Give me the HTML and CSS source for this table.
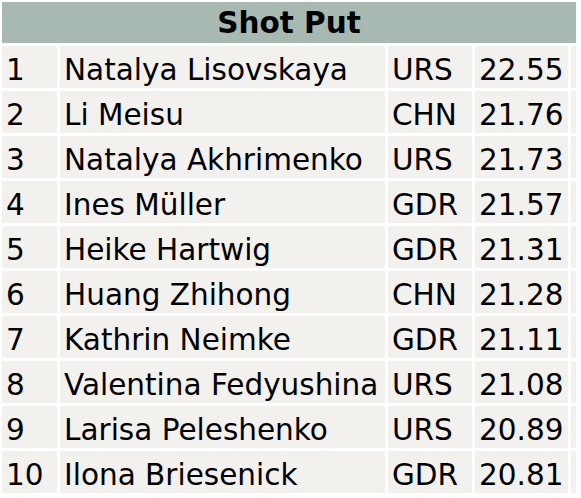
FILE: index.html
```html
<!DOCTYPE html>
<html>
<head>
<meta charset="utf-8">
<link rel="stylesheet" href="styles.css">
</head>
<body>
<table class="results">
  <colgroup>
    <col class="c-rank">
    <col class="c-name">
    <col class="c-nat">
    <col class="c-mark">
    <col class="c-pad">
  </colgroup>
  <thead>
    <tr><th class="title" colspan="5">Shot Put</th></tr>
  </thead>
  <tbody>
    <tr><td>1</td><td>Natalya Lisovskaya</td><td>URS</td><td>22.55</td><td class="pad"></td></tr>
    <tr><td>2</td><td>Li Meisu</td><td>CHN</td><td>21.76</td><td class="pad"></td></tr>
    <tr><td>3</td><td>Natalya Akhrimenko</td><td>URS</td><td>21.73</td><td class="pad"></td></tr>
    <tr><td>4</td><td>Ines Müller</td><td>GDR</td><td>21.57</td><td class="pad"></td></tr>
    <tr><td>5</td><td>Heike Hartwig</td><td>GDR</td><td>21.31</td><td class="pad"></td></tr>
    <tr><td>6</td><td>Huang Zhihong</td><td>CHN</td><td>21.28</td><td class="pad"></td></tr>
    <tr><td>7</td><td>Kathrin Neimke</td><td>GDR</td><td>21.11</td><td class="pad"></td></tr>
    <tr><td>8</td><td>Valentina Fedyushina</td><td>URS</td><td>21.08</td><td class="pad"></td></tr>
    <tr><td>9</td><td>Larisa Peleshenko</td><td>URS</td><td>20.89</td><td class="pad"></td></tr>
    <tr><td>10</td><td>Ilona Briesenick</td><td>GDR</td><td>20.81</td><td class="pad"></td></tr>
  </tbody>
</table>
</body>
</html>
```

FILE: styles.css
```css
html, body {
  margin: 0;
  padding: 0;
  background: #ffffff;
}
body {
  font-family: "DejaVu Sans", Verdana, sans-serif;
  color: #000000;
}
.results {
  border-collapse: separate;
  border-spacing: 3px;
  margin: -1px 0 0 -1px;
  table-layout: fixed;
  width: 580px;
}
.c-rank { width: 55px; }
.c-name { width: 325px; }
.c-nat { width: 84px; }
.c-mark { width: 93px; }
.c-pad { width: 5px; }
.title {
  background: #a8b9b2;
  height: 40px;
  padding: 1px 0 0 0;
  font-size: 29.5px;
  font-weight: bold;
  text-align: center;
  vertical-align: middle;
  line-height: 40px;
}
.results td {
  background: #f3f1ee;
  height: 36px;
  padding: 6px 0 0 4px;
  font-size: 29.5px;
  line-height: 36px;
  white-space: nowrap;
  overflow: hidden;
  vertical-align: middle;
}
.results td.pad {
  padding: 6px 0 0 0;
}
```
